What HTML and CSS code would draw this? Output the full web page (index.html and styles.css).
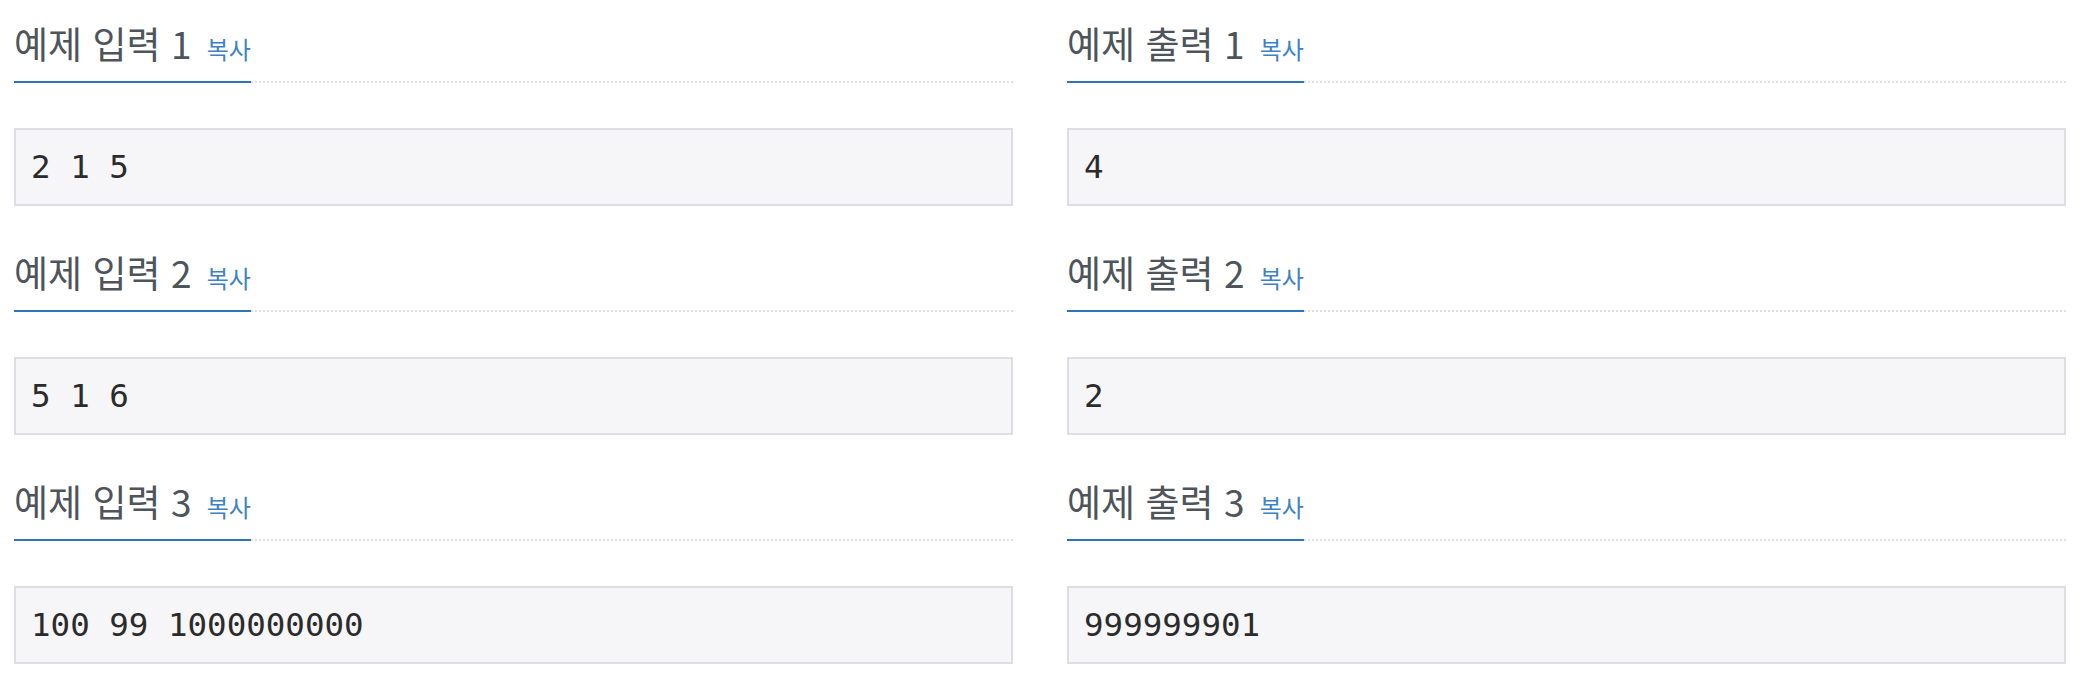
FILE: index.html
```html
<!DOCTYPE html>
<html lang="ko">
<head>
<meta charset="utf-8">
<title>예제</title>
<link rel="stylesheet" href="styles.css">
</head>
<body>
<div class="samples">
  <section class="sample">
    <div class="headline"><h2 class="title">예제 입력 1 <span class="copy">복사</span></h2></div>
    <pre class="data">2 1 5</pre>
  </section>
  <section class="sample">
    <div class="headline"><h2 class="title">예제 출력 1 <span class="copy">복사</span></h2></div>
    <pre class="data">4</pre>
  </section>
  <section class="sample">
    <div class="headline"><h2 class="title">예제 입력 2 <span class="copy">복사</span></h2></div>
    <pre class="data">5 1 6</pre>
  </section>
  <section class="sample">
    <div class="headline"><h2 class="title">예제 출력 2 <span class="copy">복사</span></h2></div>
    <pre class="data">2</pre>
  </section>
  <section class="sample">
    <div class="headline"><h2 class="title">예제 입력 3 <span class="copy">복사</span></h2></div>
    <pre class="data">100 99 1000000000</pre>
  </section>
  <section class="sample">
    <div class="headline"><h2 class="title">예제 출력 3 <span class="copy">복사</span></h2></div>
    <pre class="data">999999901</pre>
  </section>
</div>
</body>
</html>
```

FILE: styles.css
```css
html, body {
  margin: 0;
  padding: 0;
  background: #ffffff;
}

body {
  font-family: "Noto Sans CJK KR", "Noto Sans", sans-serif;
}

.samples {
  display: grid;
  grid-template-columns: 1fr 1fr;
  column-gap: 54px;
  padding: 0 14px;
}

.sample {
  display: flex;
  flex-direction: column;
}

.headline {
  display: flex;
  padding-top: 21px;
  border-bottom: 2px dotted #dedee6;
}

.title {
  margin: 0 0 -2px 0;
  padding: 0 0 16px 0;
  font-size: 37px;
  line-height: 44px;
  font-weight: 400;
  color: #4e545b;
  border-bottom: 2px solid #2f74b6;
}

.copy {
  font-size: 24px;
  line-height: 24px;
  color: #3d82c3;
  margin-left: 5px;
}

.data {
  margin: 45px 0 23px 0;
  padding: 12px 12px 12px 15px;
  height: 50px;
  font-family: "DejaVu Sans Mono", "Liberation Mono", monospace;
  font-size: 32.5px;
  line-height: 50px;
  color: #2b2b2b;
  background: #f6f6f8;
  border: 2px solid #dddde4;
}
```
